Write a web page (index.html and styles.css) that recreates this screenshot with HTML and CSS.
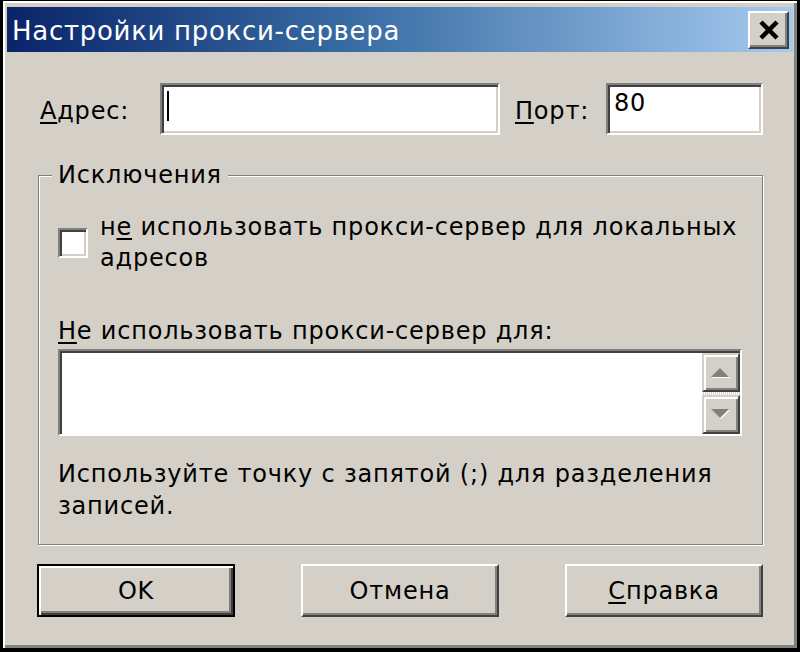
FILE: index.html
```html
<!DOCTYPE html>
<html lang="ru">
<head>
  <meta charset="UTF-8" />
  <title>Настройки прокси-сервера</title>
  <link rel="stylesheet" href="styles.css">
</head>
<body>
  <div class="window">
    <div class="titlebar">
      <span class="title">Настройки прокси-сервера</span>
      <button class="close" type="button" aria-label="Закрыть">
        <svg width="22" height="20" viewBox="0 0 22 20">
          <path d="M3 2 L19 18 M19 2 L3 18" stroke="#000" stroke-width="4.5" fill="none"/>
        </svg>
      </button>
    </div>

    <div class="content">
      <div class="row-address">
        <label class="lbl lbl-addr" for="addr"><u>А</u>дрес:</label>
        <div class="field field-addr" id="addr"><span class="caret"></span></div>
        <label class="lbl lbl-port" for="port"><u>П</u>орт:</label>
        <div class="field field-port" id="port">80</div>
      </div>

      <div class="group">
        <div class="legend">Исключения</div>

        <div class="check-row">
          <span class="checkbox"></span>
          <span class="check-text">н<u>е</u> использовать прокси-сервер для локальных<br>адресов</span>
        </div>

        <div class="list-label"><u>Н</u>е использовать прокси-сервер для:</div>
        <div class="textarea">
          <div class="scroll">
            <span class="sbtn">
              <svg width="22" height="12" viewBox="0 0 22 12">
                <polygon points="2,11 11,2 20,11" fill="#fff"/>
                <polygon points="1,10 10,1 19,10" fill="#808080"/>
              </svg>
            </span>
            <span class="track"></span>
            <span class="sbtn">
              <svg width="22" height="12" viewBox="0 0 22 12">
                <polygon points="2,2 20,2 11,11" fill="#fff"/>
                <polygon points="1,1 19,1 10,10" fill="#808080"/>
              </svg>
            </span>
          </div>
        </div>

        <p class="hint">Используйте точку с запятой (;) для разделения<br>записей.</p>
      </div>

      <div class="buttons">
        <button class="btn btn-default" type="button">OK</button>
        <button class="btn" type="button">Отмена</button>
        <button class="btn" type="button"><u>С</u>правка</button>
      </div>
    </div>
  </div>
</body>
</html>
```

FILE: styles.css
```css
body {
  margin: 0;
  background: #000;
  font-family: 'DejaVu Sans', sans-serif;
  font-size: 24px;
  letter-spacing: 0.8px;
  color: #000;
}
u {
  text-decoration-thickness: 2px;
  text-underline-offset: 3px;
}
.window {
  box-sizing: border-box;
  width: 800px;
  height: 652px;
  background: #d4d0c8;
  border-style: solid;
  border-color: #000;
  border-width: 1px 3px 4px 3px;
  box-shadow: inset 2px 2px 0 #fff, inset -3px -3px 0 #808080;
  padding: 6px 4px 0 4px;
}
.titlebar {
  height: 45px;
  display: flex;
  align-items: center;
  justify-content: space-between;
  background: linear-gradient(to right, #0a246a 0%, #3a6ea5 45%, #a6caf0 100%);
}
.title {
  color: #fff;
  font-size: 26px;
  padding: 2px 0 0 5px;
  letter-spacing: 0.7px;
}
.close {
  width: 41px;
  height: 38px;
  margin-right: 4px;
  padding: 0;
  display: flex;
  align-items: center;
  justify-content: center;
  background: #d4d0c8;
  border-style: solid;
  border-width: 2px;
  border-color: #fff #404040 #404040 #fff;
  box-shadow: inset -2px -2px 0 #808080;
}

.content {
  padding: 0 30px;
}
.row-address {
  display: flex;
  align-items: center;
  margin-top: 31px;
  height: 52px;
}
.lbl {
  box-sizing: border-box;
  padding-top: 3px;
}
.lbl-addr {
  width: 123px;
  padding-left: 3px;
}
.lbl-port {
  width: 91px;
  margin-left: 15px;
}
.field {
  box-sizing: border-box;
  height: 52px;
  background: #fff;
  border-style: solid;
  border-width: 2px;
  border-color: #808080 #fff #fff #808080;
  box-shadow: inset 2px 2px 0 #404040, inset -2px -2px 0 #d4d0c8;
}
.field-addr {
  width: 340px;
  padding: 6px 0 0 5px;
}
.caret {
  display: block;
  width: 2px;
  height: 30px;
  background: #000;
}
.field-port {
  width: 157px;
  padding: 4px 0 0 6px;
}

.group {
  box-sizing: border-box;
  width: 725px;
  height: 370px;
  margin: 40px 0 0 1px;
  padding: 0 0 0 19px;
  border: 1px solid #808080;
  box-shadow: inset 1px 1px 0 #fff, 1px 1px 0 #fff;
  display: flex;
  flex-direction: column;
  align-items: flex-start;
}
.legend {
  line-height: 30px;
  margin: -16px 0 0 -6px;
  padding: 0 6px;
  background: #d4d0c8;
}
.check-row {
  display: flex;
  align-items: center;
  gap: 12px;
  margin-top: 22px;
  line-height: 31px;
}
.checkbox {
  box-sizing: border-box;
  width: 30px;
  height: 30px;
  background: #fff;
  border-style: solid;
  border-width: 2px;
  border-color: #808080 #fff #fff #808080;
  box-shadow: inset 2px 2px 0 #404040, inset -2px -2px 0 #d4d0c8;
}
.list-label {
  margin-top: 42px;
  line-height: 31px;
}
.textarea {
  box-sizing: border-box;
  width: 684px;
  height: 87px;
  margin-top: 2px;
  background: #fff;
  border-style: solid;
  border-width: 2px;
  border-color: #808080 #fff #fff #808080;
  box-shadow: inset 2px 2px 0 #404040;
  display: flex;
  justify-content: flex-end;
  padding: 2px 0 0;
}
.scroll {
  width: 38px;
  display: flex;
  flex-direction: column;
}
.sbtn {
  box-sizing: border-box;
  height: 40px;
  display: flex;
  align-items: center;
  justify-content: center;
  background: #d4d0c8;
  border-style: solid;
  border-width: 2px;
  border-color: #d4d0c8 #404040 #404040 #d4d0c8;
  box-shadow: inset 2px 2px 0 #fff, inset -2px -2px 0 #808080;
}
.track {
  height: 3px;
  background: repeating-linear-gradient(to right, #fff 0 1px, #d4d0c8 1px 2px);
}
.hint {
  margin: 22px 0 0;
  line-height: 32px;
}

.buttons {
  display: flex;
  justify-content: space-between;
  margin-top: 19px;
}
.btn {
  box-sizing: border-box;
  width: 198px;
  height: 53px;
  font-family: inherit;
  font-size: 24px;
  letter-spacing: 0.8px;
  color: #000;
  background: #d4d0c8;
  border-style: solid;
  border-width: 2px;
  border-color: #fff #404040 #404040 #fff;
  box-shadow: inset -2px -2px 0 #808080;
  padding: 0;
}
.btn-default {
  border: 2px solid #000;
  box-shadow: inset 2px 2px 0 #fff, inset -2px -2px 0 #404040, inset -4px -4px 0 #808080;
}
```
